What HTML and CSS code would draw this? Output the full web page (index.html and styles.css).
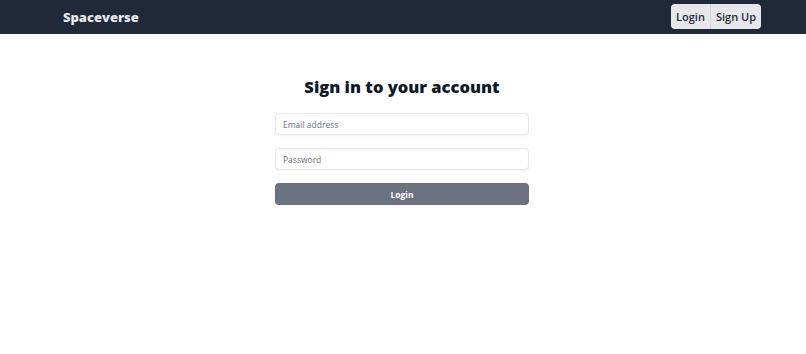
FILE: index.html
```html
<!DOCTYPE html>
<html lang="en">
<head>
  <meta charset="UTF-8">
  <meta name="viewport" content="width=device-width, initial-scale=1.0">
  <title>Spaceverse - Login</title>
  <link rel="stylesheet" href="styles.css">
</head>
<body>
  <nav class="navbar">
    <div class="brand">Spaceverse</div>
    <div class="auth-buttons">
      <button class="nav-btn">Login</button>
      <button class="nav-btn">Sign Up</button>
    </div>
  </nav>

  <main class="login">
    <h1>Sign in to your account</h1>
    <form class="login-form">
      <input type="email" placeholder="Email address">
      <input type="password" placeholder="Password">
      <button type="submit" class="submit-btn">Login</button>
    </form>
  </main>
</body>
</html>
```

FILE: styles.css
```css
/* General */
body {
  margin: 0;
  font-family: 'Open Sans', 'Noto Sans', sans-serif;
  background: #fff;
  color: #111827;
}

/* Navbar */
.navbar {
  height: 34px;
  background: #1f2937;
  display: flex;
  align-items: center;
  justify-content: space-between;
  padding: 0 45px 0 63px;
}

.brand {
  color: #e5e7eb;
  font-size: 13px;
  font-weight: 800;
}

.auth-buttons {
  display: flex;
  background: #e5e7eb;
  border-radius: 4px;
  overflow: hidden;
  margin-top: -1px;
}

.nav-btn {
  border: none;
  background: none;
  font-family: inherit;
  font-size: 11px;
  font-weight: 600;
  color: #1f2937;
  padding: 0 5px;
  height: 25px;
}

.nav-btn + .nav-btn {
  border-left: 1px solid #d1d5db;
}

/* Login form */
.login {
  width: 254px;
  margin: 0 auto;
  padding: 42px 2px 0 0;
}

h1 {
  margin: 0 0 15px;
  text-align: center;
  font-size: 16.5px;
  font-weight: 800;
  line-height: 22px;
  color: #111827;
}

.login-form {
  display: flex;
  flex-direction: column;
  gap: 13px;
}

.login-form input {
  height: 22px;
  box-sizing: border-box;
  border: 1px solid #e5e7eb;
  border-radius: 4px;
  padding: 0 7px;
  font-family: inherit;
  font-size: 8.5px;
  box-shadow: 0 1px 2px rgba(0, 0, 0, 0.06);
}

.login-form input::placeholder {
  color: #6b7280;
}

.submit-btn {
  height: 22px;
  border: none;
  border-radius: 4px;
  background: #6b7280;
  color: #fff;
  font-family: inherit;
  font-size: 8.5px;
  font-weight: 700;
}
```
